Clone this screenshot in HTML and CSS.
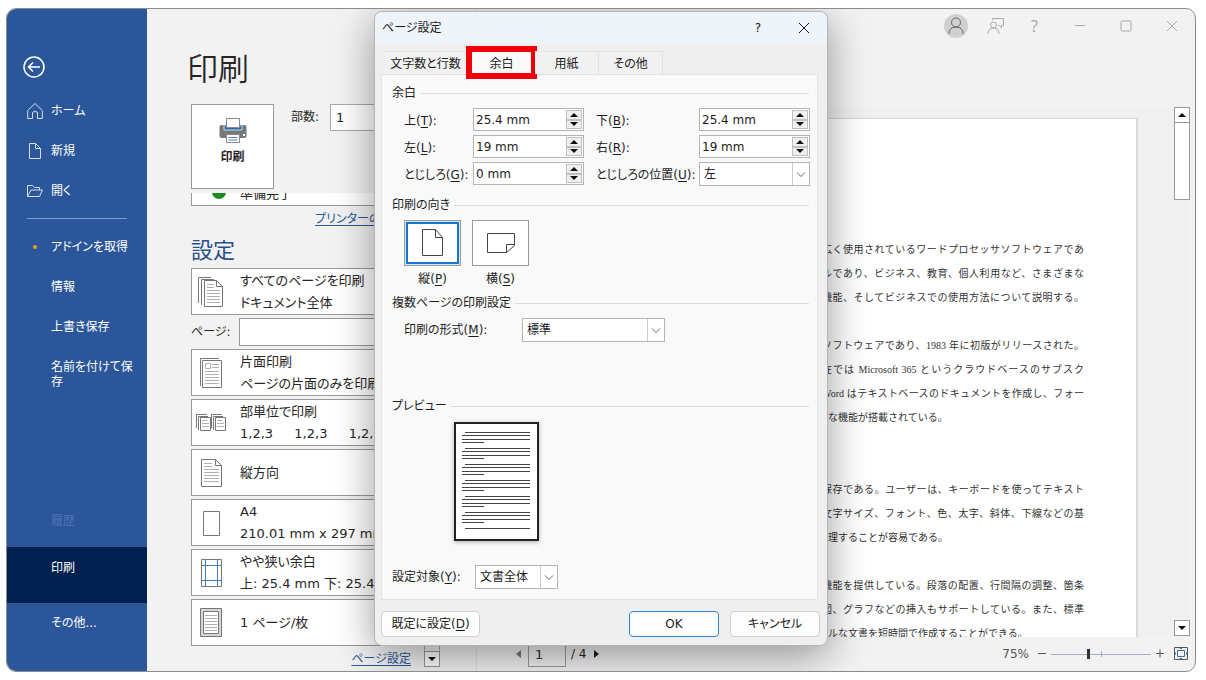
FILE: index.html
```html
<!DOCTYPE html>
<html lang="ja">
<head>
<meta charset="utf-8">
<meta name="viewport" content="width=device-width, initial-scale=1">
<title>印刷 - ページ設定</title>
<link rel="stylesheet" href="styles.css">
</head>
<body>
<div class="window">
  <nav class="sidebar">
    <button class="back" aria-label="戻る"><svg width="24" height="24" viewBox="0 0 24 24"><circle cx="12" cy="12" r="10"/><path d="M18 12H7M11 7.500L6.500 12l4.500 4.500"/></svg></button>
    <a class="nav-item" href="#"><svg width="16" height="18" viewBox="0 0 16 18"><path d="M.7 8.500L8 1.500l7.300 7V16.500H10.500V11Q10.500 9.500 8 9.500T5.500 11v5.500H.7z"/></svg>ホーム</a>
    <a class="nav-item" href="#"><svg width="16" height="18" viewBox="0 0 16 18"><path d="M2.500 1.500h6l5 5v10h-11zM8.500 1.500v5h5"/></svg>新規</a>
    <a class="nav-item" href="#"><svg width="16" height="18" viewBox="0 0 16 18"><path d="M.5 14.500v-11h5l2 2h5V8M.5 14.500L4 8h11.500L12.500 14.500z"/></svg>開く</a>
    <hr class="nav-line">
    <a class="nav-item addin" href="#"><span class="dot"></span>アドインを取得</a>
    <a class="nav-item" href="#">情報</a>
    <a class="nav-item" href="#">上書き保存</a>
    <a class="nav-item wrap" href="#">名前を付けて保存</a>
    <span class="nav-item disabled">履歴</span>
    <a class="nav-item current" href="#" aria-current="page">印刷</a>
    <a class="nav-item last" href="#">その他...</a>
  </nav>

  <section class="settings">
    <h1>印刷</h1>
    <div class="print-row">
      <button class="print-button">
        <svg width="28" height="26" viewBox="0 0 28 26"><path d="M0.500 9q0-2 2-2h23q2 0 2 2v9q0 2-2 2h-23q-2 0-2-2z" fill="#777" stroke="none"/><path d="M5 7h18v5H5z" fill="#2e6ca8" stroke="#c9dcec"/><path d="M7.500.5h13v9h-13z" fill="#fff" stroke="#888"/><path d="M7.500 16.500h13v8h-13z" fill="#fff" stroke="#888"/><path d="M9.500 19.500h9M9.500 22h9" stroke="#4a86bd"/><path d="M24 16h2v2h-2z" fill="#fff" stroke="none"/></svg>
        印刷
      </button>
      <label for="copies">部数:</label>
      <input id="copies" class="copies" type="text" value="1">
    </div>
    <div class="scroller">
      <div class="options">
        <div class="status"><span class="ready"></span>準備完了</div>
        <a class="link" href="#">プリンターのプロパティ</a>
        <h2>設定</h2>
        <button class="option"><svg width="28" height="34" viewBox="0 0 28 34"><path d="M1.500 28V2.500H14M4.500 30V4.500H17"/><path class="paper" d="M7.500 5.500h12l6 6v20h-18zM19.500 5.500v6h6"/><path class="rule" d="M10 9.500h7M10 12.500h7M10 15.500h13M10 18.500h13M10 21.500h13M10 24.500h13M10 27.500h13"/></svg><span>すべてのページを印刷<br>ドキュメント全体</span></button>
        <div class="pages"><label for="pages">ページ:</label><input id="pages" type="text"></div>
        <button class="option"><svg width="28" height="34" viewBox="0 0 28 34"><path d="M3.500 30V2.500H22"/><path class="paper" d="M5.500 4.500h19v27h-19z"/><path class="rule" d="M8.500 7.500h5v5h-5zM15 8.500h7M15 11.500h7M8 15.500h14M8 18.500h14M8 21.500h14M8 24.500h14M8 27.500h14"/></svg><span>片面印刷<br>ページの片面のみを印刷</span></button>
        <button class="option"><svg width="30" height="20" viewBox="0 0 30 20"><path d="M.5 15V1.500H11M2.500 17V3.500H12M15.500 15V1.500H26M17.500 17V3.500H27"/><path class="paper" d="M4.500 4.500h10v13h-10zM19.500 4.500h10v13h-10z"/><path class="rule" d="M6 7.500h5M6 10.500h7M6 13.500h7M21 7.500h5M21 10.500h7M21 13.500h7"/></svg><span>部単位で印刷<br>1,2,3&emsp;&nbsp; 1,2,3&emsp;&nbsp; 1,2,3</span></button>
        <button class="option"><svg width="28" height="34" viewBox="0 0 28 34"><path class="paper" d="M4.500 3.500h14l6 6v21h-20zM18.500 3.500v6h6"/><path class="rule" d="M7 7.500h8M7 10.500h8M7 13.500h15M7 16.500h15M7 19.500h15M7 22.500h15M7 25.500h15"/></svg><span>縦方向</span></button>
        <button class="option"><svg width="28" height="34" viewBox="0 0 28 34"><path class="paper" d="M6.500 5.500h16v24h-16z"/></svg><span>A4<br>210.01 mm x 297 mm</span></button>
        <button class="option"><svg width="28" height="34" viewBox="0 0 28 34"><path class="paper" d="M4.500 3.500h20v27h-20z"/><path class="guide" d="M8.500 4v26M20.500 4v26M5 9.500h19M5 24.500h19"/></svg><span>やや狭い余白<br>上: 25.4 mm 下: 25.4 mm</span></button>
        <button class="option"><svg width="28" height="34" viewBox="0 0 28 34"><path d="M3.500 2.500h21v28h-21z" fill="#d8d8d8"/><path class="paper" d="M6.500 5.500h15v22h-15z"/><path class="rule" d="M8 9.500h12M8 12.500h12M8 15.500h12M8 18.500h12M8 21.500h12M8 24.500h12"/></svg><span>1 ページ/枚</span></button>
        <a class="link setup" href="#">ページ設定</a>
      </div>
      <div class="side-scroll"><button class="scroll-button" aria-label="下へ"><i class="down"></i></button></div>
    </div>
  </section>

  <section class="preview">
    <header class="caption">
      <button class="avatar" aria-label="アカウント"><svg width="16" height="18" viewBox="0 0 16 18"><circle cx="8" cy="5.500" r="4.500"/><path d="M1 17q0-7 7-7t7 7"/></svg></button>
      <button class="cap feedback" aria-label="フィードバック"><svg width="18" height="18" viewBox="0 0 18 18"><circle cx="6.500" cy="8" r="3"/><path d="M1 17q0-6 5.500-6t5.500 6M5.500 3V1.500h11v7h-2V11L12 8.500h-1"/></svg></button>
      <button class="cap help" aria-label="ヘルプ">?</button>
      <button class="cap wide" aria-label="最小化"><svg width="12" height="12" viewBox="0 0 12 12"><path d="M1 5.500h10"/></svg></button>
      <button class="cap wide" aria-label="最大化"><svg width="12" height="12" viewBox="0 0 12 12"><rect x="1" y="1" width="10" height="10" rx="1"/></svg></button>
      <button class="cap wide" aria-label="閉じる"><svg width="12" height="12" viewBox="0 0 12 12"><path d="M1 1l10 10M11 1L1 11"/></svg></button>
    </header>
    <div class="canvas">
      <article class="sheet">
        <p><span class="full">広く使用されているワードプロセッサソフトウェアであ</span><span class="full">ルであり、ビジネス、教育、個人利用など、さまざまな</span><span class="full">機能、そしてビジネスでの使用方法について説明する。</span></p>
        <p><span class="full">ソフトウェアであり、1983 年に初版がリリースされた。</span><span class="full">在では Microsoft 365 というクラウドベースのサブスク</span><span class="full">Word はテキストベースのドキュメントを作成し、フォー</span><span class="tail">な機能が搭載されている。</span></p>
        <p class="far"><span class="full">保存である。ユーザーは、キーボードを使ってテキスト</span><span class="full">文字サイズ、フォント、色、太字、斜体、下線などの基</span><span class="tail">理することが容易である。</span></p>
        <p><span class="full">機能を提供している。段落の配置、行間隔の調整、箇条</span><span class="full">図、グラフなどの挿入もサポートしている。また、標準</span><span class="tail">ルな文書を短時間で作成することができる。</span></p>
      </article>
      <div class="page-scroll">
        <button class="scroll-button" aria-label="前へ"><i class="up"></i></button>
        <div class="thumb"></div>
        <button class="scroll-button bottom" aria-label="次へ"><i class="down"></i></button>
      </div>
    </div>
    <footer class="statusbar">
      <button class="pager" aria-label="前のページ"><i class="left"></i></button>
      <input class="page-number" type="text" value="1" aria-label="ページ番号">
      <span>/ 4</span>
      <button class="pager" aria-label="次のページ"><i class="right"></i></button>
      <div class="zoom">
        <output>75%</output>
        <button aria-label="縮小"><svg width="10" height="10" viewBox="0 0 10 10"><path d="M1 4.500h8"/></svg></button>
        <input type="range" min="0" max="100" value="37" aria-label="ズーム">
        <button aria-label="拡大"><svg width="10" height="10" viewBox="0 0 10 10"><path d="M1 4.500h8M5 .5v8"/></svg></button>
        <button class="fit-page" aria-label="ページに合わせる"><svg width="16" height="14" viewBox="0 0 16 14"><path d="M1.500.5h13v12h-13z"/><path class="fit" d="M4.500 3.500h7v6h-7zM7 1.500h2M7 11.500h2M2.500 5.500v2M13.500 5.500v2"/></svg></button>
      </div>
    </footer>
  </section>

  <div class="dialog" role="dialog" aria-labelledby="dialog-title">
    <header class="dialog-bar">
      <span id="dialog-title">ページ設定</span>
      <button aria-label="ヘルプ">?</button>
      <button aria-label="閉じる"><svg width="12" height="12" viewBox="0 0 12 12"><path d="M1 1l10 10M11 1L1 11"/></svg></button>
    </header>
    <div class="tabs" role="tablist">
      <button class="tab first" role="tab">文字数と行数</button>
      <button class="tab active" role="tab" aria-selected="true">余白<span class="marker"></span></button>
      <button class="tab" role="tab">用紙</button>
      <button class="tab" role="tab">その他</button>
    </div>
    <div class="panel">
      <h3>余白</h3>
      <div class="margins">
        <label for="m-top">上(<u>T</u>):</label>
        <div class="spin"><input id="m-top" type="text" value="25.4 mm"><button aria-label="増やす"><i class="up"></i></button><button aria-label="減らす"><i class="down"></i></button></div>
        <label for="m-bottom">下(<u>B</u>):</label>
        <div class="spin"><input id="m-bottom" type="text" value="25.4 mm"><button aria-label="増やす"><i class="up"></i></button><button aria-label="減らす"><i class="down"></i></button></div>
        <label for="m-left">左(<u>L</u>):</label>
        <div class="spin"><input id="m-left" type="text" value="19 mm"><button aria-label="増やす"><i class="up"></i></button><button aria-label="減らす"><i class="down"></i></button></div>
        <label for="m-right">右(<u>R</u>):</label>
        <div class="spin"><input id="m-right" type="text" value="19 mm"><button aria-label="増やす"><i class="up"></i></button><button aria-label="減らす"><i class="down"></i></button></div>
        <label for="gutter">とじしろ(<u>G</u>):</label>
        <div class="spin"><input id="gutter" type="text" value="0 mm"><button aria-label="増やす"><i class="up"></i></button><button aria-label="減らす"><i class="down"></i></button></div>
        <label for="gutter-pos">とじしろの位置(<u>U</u>):</label>
        <div class="drop"><select id="gutter-pos"><option>左</option></select><svg width="10" height="6" viewBox="0 0 10 6"><path d="M1 .5l4 4 4-4"/></svg></div>
      </div>

      <h3 class="h-orient">印刷の向き</h3>
      <div class="orients">
        <div class="orient"><button id="portrait" class="selected" aria-pressed="true"><svg width="24" height="30" viewBox="0 0 24 30"><path d="M1.500 1.500h13l7 8v18h-20zM14.500 1.500v8h7"/></svg></button><label for="portrait">縦(<u>P</u>)</label></div>
        <div class="orient"><button id="landscape"><svg width="30" height="24" viewBox="0 0 30 24"><path d="M1.500 2.500h27v12l-8 7h-19zM20.500 21.500v-8h8"/></svg></button><label for="landscape">横(<u>S</u>)</label></div>
      </div>

      <h3 class="h-multi">複数ページの印刷設定</h3>
      <div class="multi">
        <label for="multi">印刷の形式(<u>M</u>):</label>
        <div class="drop"><select id="multi"><option>標準</option></select><svg width="10" height="6" viewBox="0 0 10 6"><path d="M1 .5l4 4 4-4"/></svg></div>
      </div>

      <h3 class="h-preview">プレビュー</h3>
      <svg class="mini" width="85" height="119" viewBox="0 0 85 119"><rect x="1" y="1" width="83" height="117"/><path d="M11 10.500h65M8 13.500h68M8 17.500h68M8 20.500h22M11 26.500h65M8 29.500h68M8 33.500h68M8 36.500h22M11 42.500h65M8 45.500h68M8 49.500h68M8 52.500h22M11 58.500h65M8 61.500h68M8 65.500h68M8 68.500h22M11 74.500h65M8 77.500h68M8 81.500h68M8 84.500h22M11 90.500h65M8 93.500h68M8 97.500h68M8 100.500h22M11 106.500h65"/></svg>
      <div class="target">
        <label for="target">設定対象(<u>Y</u>):</label>
        <div class="drop"><select id="target"><option>文書全体</option></select><svg width="10" height="6" viewBox="0 0 10 6"><path d="M1 .5l4 4 4-4"/></svg></div>
      </div>
    </div>
    <footer class="actions">
      <button class="default">既定に設定(<u>D</u>)</button>
      <button class="ok">OK</button>
      <button>キャンセル</button>
    </footer>
  </div>
</div>
</body>
</html>
```
FILE: styles.css
```css
* { box-sizing: border-box; }
body {
  margin: 0;
  padding: 8px 10px 8px 6px;
  min-height: 100vh;
  display: flex;
  background: #fff;
  color: #262626;
  font: 12px/16px "DejaVu Sans", "Noto Sans CJK JP", sans-serif;
  font-feature-settings: "palt";
}
button, input, select {
  font: inherit;
  font-feature-settings: inherit;
  color: inherit;
  margin: 0;
  padding: 0;
  border: 0;
  border-radius: 0;
  background: none;
}
svg { fill: none; stroke: currentColor; flex: none; }
h1, h2, h3, p { margin: 0; font-weight: 400; }
a { color: inherit; text-decoration: none; }
u { text-underline-offset: 2px; }

.window {
  position: relative;
  flex: 1;
  display: flex;
  border: 1px solid #8c8c8c;
  border-radius: 10px;
  overflow: hidden;
  background: #f2f2f2;
}

/* arrow heads */
i { width: 0; height: 0; border: 4px solid transparent; }
.up { border-bottom-color: #111; border-top: 0; }
.down { border-top-color: #111; border-bottom: 0; }
.left { border-right: 5px solid #777; border-left: 0; }
.right { border-left: 5px solid #222; border-right: 0; }

/* navigation */
.sidebar {
  flex: 0 0 140px;
  display: flex;
  flex-direction: column;
  background: #2b579a;
  color: #fff;
  padding: 46px 0 28px;
}
.back { height: 24px; width: 24px; margin: 0 0 12px 15px; }
.back svg { stroke-width: 1.5; }
.nav-item { position: relative; display: flex; flex: none; align-items: center; height: 40px; padding: 0 12px 0 44px; }
.nav-item svg { position: absolute; left: 20px; color: #d3deef; }
.nav-line { width: 100px; height: 1px; border: 0; margin: 7px 0 8px 20px; background: #7d9ac6; }
.dot { position: absolute; left: 26px; width: 4px; height: 4px; border-radius: 2px; background: #eb9d2b; }
.wrap { height: auto; padding-top: 13px; line-height: 15px; }
.disabled { margin-top: auto; margin-bottom: 6px; color: #4e76b1; }
.current { height: 56px; padding-bottom: 14px; background: #002050; }

/* print settings */
.settings {
  flex: 0 0 330px;
  min-width: 0;
  display: flex;
  flex-direction: column;
  padding: 38px 36px 0 44px;
  border-right: 1px solid #e0e0e0;
}
h1 { font-size: 31px; line-height: 44px; font-weight: 350; margin: 0 0 13px -4px; }
.print-row { display: flex; align-items: flex-start; }
.print-row label { margin: 5px 11px 0 17px; }
.print-button {
  width: 83px;
  height: 85px;
  flex: none;
  display: flex;
  flex-direction: column;
  align-items: center;
  gap: 5px;
  padding-top: 13px;
  border: 1px solid #999;
  background: #fff;
  font-weight: 700;
}
.copies { flex: 1; width: 0; min-width: 0; height: 27px; padding-left: 5px; border: 1px solid #aaa; background: #fff; font-size: 13px; }
.scroller { flex: 1; display: flex; justify-content: space-between; overflow: hidden; margin-top: 4px; }
.options { width: 222px; display: flex; flex-direction: column; gap: 3px; }
.status, .option {
  display: flex;
  align-items: center;
  flex: none;
  height: 47px;
  border: 1px solid #999;
  background: #fff;
  font-size: 13px;
  line-height: 22px;
  text-align: left;
  white-space: nowrap;
  overflow: hidden;
}
.status { margin-top: -34px; align-items: flex-end; }
.ready { width: 14px; height: 14px; border-radius: 7px; background: #1d8a1d; margin: 0 14px 6px 20px; }
.link { color: #2b579a; text-decoration: underline; text-underline-offset: 2px; line-height: 20px; margin-left: 124px; white-space: nowrap; }
.setup { align-self: flex-end; margin: 0 2px 0 0; }
h2 { font-size: 22px; line-height: 28px; color: #2b4f88; margin: 5px 0 0; }
.option svg { width: 38px; margin-right: 10px; color: #777; }
.option span { min-width: 0; }
.paper { fill: #fff; }
.rule { stroke: #b0b0b0; }
.guide { stroke: #3f7fc0; }
.pages { display: flex; align-items: center; gap: 8px; }
.pages input { flex: 1; width: 0; min-width: 0; height: 28px; border: 1px solid #999; background: #fff; }
.side-scroll { display: flex; align-items: flex-end; width: 16px; margin-bottom: 4px; border: 1px solid #aaa; border-bottom: 0; }
.scroll-button { display: flex; align-items: center; justify-content: center; flex: none; width: 16px; height: 16px; border: 1px solid #999; background: #fff; }
.side-scroll .scroll-button { margin-left: -1px; }

/* document preview */
.preview { flex: 1; min-width: 0; display: flex; flex-direction: column; }
.caption { display: flex; justify-content: flex-end; align-items: center; height: 34px; color: #aaa; }
.caption button { display: flex; align-items: center; justify-content: center; }
.avatar { width: 24px; height: 24px; margin-right: 12px; border-radius: 12px; background: #d0d0d0; color: #666; }
.feedback { width: 32px; }
.help { width: 45px; font-family: "Noto Sans", sans-serif; font-size: 16px; }
.wide { width: 46px; }
.canvas { flex: 1; display: flex; justify-content: flex-end; margin: 64px 5px 0 0; background: #f0f0f0; min-height: 0; }
.sheet {
  flex: 1;
  display: flex;
  flex-direction: column;
  align-items: flex-end;
  height: 519px;
  margin-top: 11px;
  padding: 119px 52px 0 0;
  border: 1px solid #d8d8d8;
  border-right-width: 2px;
  border-bottom: 0;
  background: #fff;
  overflow: hidden;
  font: 10px/24px "Liberation Serif", "Noto Sans CJK JP", serif;
  color: #333;
}
.sheet p { width: 262px; margin-bottom: 24px; }
.sheet p:nth-child(2) { margin-bottom: 48px; }
.sheet span { display: block; white-space: nowrap; }
.full { text-align: justify; text-align-last: justify; font-feature-settings: normal; }
.sheet .full { white-space: normal; }
.tail { padding-left: 6px; font-feature-settings: normal; }
.page-scroll { width: 16px; display: flex; flex-direction: column; margin-left: 36px; height: 529px; }
.thumb { height: 77px; border: 1px solid #999; border-top: 0; background: #fff; }
.bottom { margin-top: auto; }
.statusbar { display: flex; align-items: center; height: 34px; padding: 0 6px 0 36px; gap: 5px; }
.pager { display: flex; align-items: center; justify-content: center; width: 10px; height: 16px; }
.page-number { width: 38px; height: 26px; padding-left: 6px; border: 1px solid #999; font-size: 13px; }
.zoom { margin-left: auto; display: flex; align-items: center; gap: 4px; color: #555; }
.zoom output { margin-right: 4px; }
.zoom button { display: flex; }
.zoom .fit-page { margin-left: 4px; }
.zoom input { appearance: none; width: 100px; height: 12px; background: linear-gradient(#a5b0bc, #a5b0bc) 0 6px / 100% 1px no-repeat, linear-gradient(#a5b0bc, #a5b0bc) 50px 3px / 1px 6px no-repeat; }
.zoom input::-webkit-slider-thumb { appearance: none; width: 3px; height: 10px; background: #333; }
.fit { stroke: #41719c; }

/* page setup dialog */
.dialog {
  position: absolute;
  left: 367px;
  top: 2px;
  width: 454px;
  display: flex;
  flex-direction: column;
  border: 1px solid #b5b5b5;
  border-radius: 8px;
  background: #efefef;
  box-shadow: 0 10px 40px rgba(0, 0, 0, .4);
  color: #1c1c1c;
}
.dialog-bar { display: flex; align-items: center; height: 31px; padding-left: 7px; border-radius: 8px 8px 0 0; background: #eef4f9; }
.dialog-bar span { flex: 1; }
.dialog-bar button { width: 46px; display: flex; align-items: center; justify-content: center; }
.tabs { display: flex; height: 23px; margin: 8px 0 0 8px; }
.tab { position: relative; width: 64px; padding-top: 1px; border: 1px solid #e2e2e2; border-width: 1px 1px 0 0; background: #f1f1f1; }
.tab.first { width: 86px; }
.tab.active { width: 66px; background: #f9f9f9; }
.marker { position: absolute; inset: -6px -3px -5px -3px; border: 6px solid #f00009; }
.panel { margin: 0 9px 0 6px; padding: 10px 8px 10px 10px; border: 1px solid #e3e3e3; background: #f9f9f9; }
h3 { display: flex; align-items: center; gap: 4px; font-size: 12px; line-height: 16px; }
h3::after { content: ""; flex: 1; height: 1px; background: #ddd; }
.margins { display: grid; grid-template-columns: 57px 111px 91px 111px; column-gap: 12px; row-gap: 4px; padding-left: 12px; margin-top: 7px; }
.margins label { align-self: center; white-space: nowrap; padding-top: 2px; }
.spin { display: grid; grid-template-columns: 1fr 16px; height: 23px; padding: 1px; border: 1px solid #b4b4b4; background: #fff; }
.spin input { grid-row: span 2; min-width: 0; padding-left: 1px; }
.spin button { display: flex; align-items: center; justify-content: center; border: 1px solid #c0c0c0; background: #f0f0f0; }
.spin i { border-width: 4px; }
.spin .up { border-top: 0; }
.spin .down { border-bottom: 0; }
.drop { position: relative; height: 24px; }
.drop select { appearance: none; width: 100%; height: 100%; padding-left: 4px; border: 1px solid #b4b4b4; background: linear-gradient(#ccc, #ccc) right 16px top / 1px 100% no-repeat #fff; }
.drop svg { position: absolute; right: 4px; top: 10px; color: #666; pointer-events: none; }
.h-orient { margin-top: 11px; }
.orients { display: flex; gap: 11px; padding-left: 12px; margin-top: 7px; }
.orient { width: 57px; display: flex; flex-direction: column; align-items: center; gap: 5px; }
.orient button { display: flex; align-items: center; justify-content: center; width: 57px; height: 46px; border: 1px solid #999; background: #fff; color: #444; }
.orient .selected { box-shadow: inset 0 0 0 1px #d5e8f8, inset 0 0 0 3px #1676cf; }
.h-multi { margin-top: 8px; }
.multi { display: grid; grid-template-columns: 118px 143px; align-items: center; padding-left: 12px; margin-top: 7px; }
.h-preview { margin-top: 56px; }
.mini { display: block; margin: 8px 0 24px 62px; fill: #fff; stroke: #444; filter: drop-shadow(0 1px 2px rgba(0, 0, 0, .3)); }
.mini rect { stroke-width: 2; stroke: #222; }
.target { display: grid; grid-template-columns: 83px 83px; align-items: center; }
.actions { display: flex; gap: 11px; padding: 11px 7px 8px 6px; }
.actions button { width: 90px; height: 26px; border: 1px solid #d0d0d0; border-radius: 4px; background: #fdfdfd; }
.actions .default { width: 99px; margin-right: auto; }
.actions .ok { border-color: #3f86c6; }
```
